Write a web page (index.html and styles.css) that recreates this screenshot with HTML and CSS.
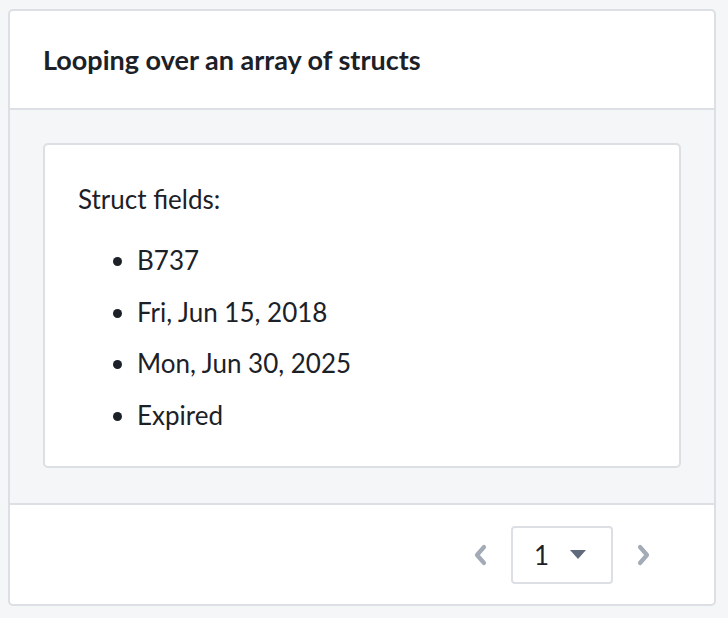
FILE: index.html
```html
<!DOCTYPE html>
<html lang="en">
<head>
    <meta charset="UTF-8">
    <meta name="viewport" content="width=device-width, initial-scale=1.0">
    <title>Looping over an array of structs</title>
    <link rel="stylesheet" href="styles.css">
</head>
<body>
    <div class="widget-card">
        <div class="widget-header">
            <h2 class="widget-title">Looping over an array of structs</h2>
        </div>

        <div class="widget-body">
            <div class="struct-card">
                <p class="struct-label">Struct fields:</p>
                <ul class="struct-list">
                    <li>B737</li>
                    <li>Fri, Jun 15, 2018</li>
                    <li>Mon, Jun 30, 2025</li>
                    <li>Expired</li>
                </ul>
            </div>
        </div>

        <div class="widget-footer">
            <button class="page-btn" type="button" aria-label="Previous page">
                <svg width="16" height="22" viewBox="0 0 16 22">
                    <polyline points="12,3 5,11 12,19" fill="none" stroke="#a3abb6" stroke-width="4.2" stroke-linecap="round" stroke-linejoin="round"/>
                </svg>
            </button>
            <div class="page-select">
                <span class="page-num">1</span>
                <svg class="caret" width="16" height="9" viewBox="0 0 16 9">
                    <polygon points="0,0 16,0 8,9" fill="#5f6b7c"/>
                </svg>
            </div>
            <button class="page-btn" type="button" aria-label="Next page">
                <svg width="16" height="22" viewBox="0 0 16 22">
                    <polyline points="4,3 11,11 4,19" fill="none" stroke="#a3abb6" stroke-width="4.2" stroke-linecap="round" stroke-linejoin="round"/>
                </svg>
            </button>
        </div>
    </div>
</body>
</html>
```

FILE: styles.css
```css
body {
    margin: 0;
    padding: 9px 12px 12px 8px;
    background-color: #f5f6f8;
    font-family: Lato, "Open Sans", sans-serif;
    color: #1c2127;
}
.widget-card {
    background: white;
    border: 2px solid #dcdfe3;
    border-radius: 5px;
    overflow: hidden;
}
.widget-header {
    height: 97px;
    display: flex;
    align-items: center;
    padding: 0 33px;
    border-bottom: 2px solid #dcdfe3;
}
.widget-title {
    margin: 0;
    font-size: 27px;
    font-weight: 700;
}
.widget-body {
    background-color: #f5f6f8;
    padding: 33px 33px 35px 33px;
    border-bottom: 2px solid #dcdfe3;
}
.struct-card {
    background: white;
    border: 2px solid #dcdfe3;
    border-radius: 5px;
    padding: 39px 33px 27px 33px;
    height: 255px;
}
.struct-label {
    margin: 0;
    font-size: 26px;
    line-height: 30px;
}
.struct-list {
    margin: 31px 0 0 0;
    padding-left: 59px;
    font-size: 26px;
    line-height: 30px;
}
.struct-list li {
    margin-bottom: 21.5px;
}
.widget-footer {
    height: 99px;
    display: flex;
    align-items: center;
    justify-content: flex-end;
    gap: 15px;
    padding-right: 54px;
}
.page-btn {
    width: 32px;
    height: 40px;
    border: none;
    background: none;
    padding: 0;
    display: flex;
    align-items: center;
    justify-content: center;
    cursor: pointer;
}
.page-select {
    width: 98px;
    height: 54px;
    border: 2px solid #dcdfe3;
    border-radius: 4px;
    display: flex;
    align-items: center;
}
.page-num {
    margin-left: 21px;
    font-size: 26px;
}
.caret {
    margin-left: 21px;
}
```
